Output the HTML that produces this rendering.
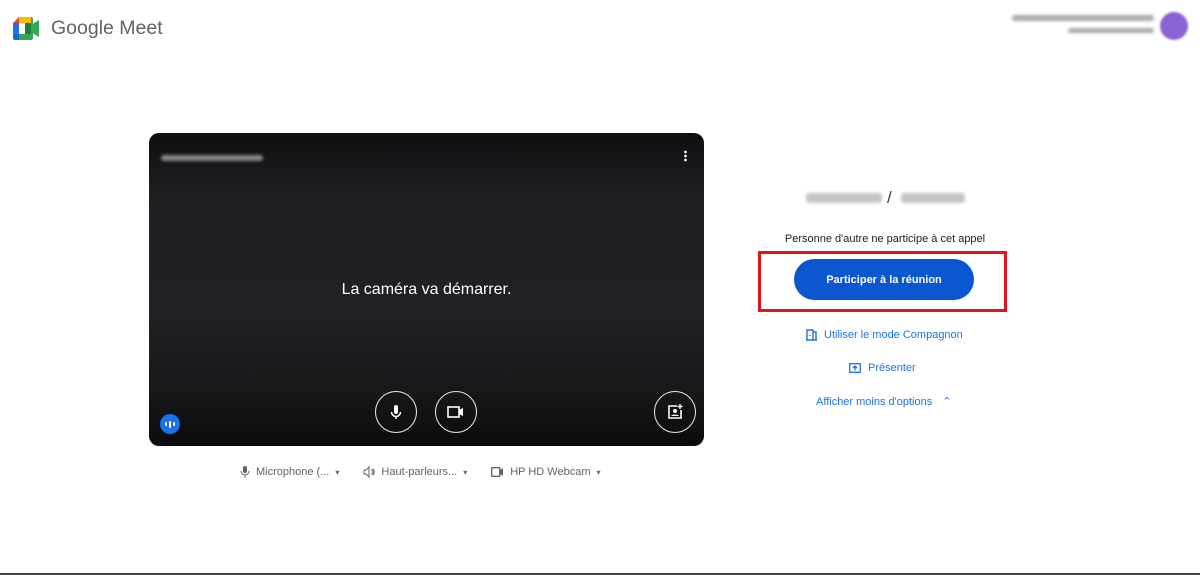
<!DOCTYPE html>
<html><head><meta charset="utf-8"><style>
*{margin:0;padding:0;box-sizing:border-box}
body{width:1200px;height:575px;background:#fff;position:relative;overflow:hidden;font-family:"Liberation Sans",sans-serif}
.abs{position:absolute}
.video{left:149px;top:133px;width:555px;height:313px;border-radius:10px;background:linear-gradient(#0e0f11 0%,#1f2023 22%,#202124 60%,#151618 85%,#0b0b0c 100%)}
.circ{width:42px;height:42px;border:1.5px solid #e8eaed;border-radius:50%;display:flex;align-items:center;justify-content:center}
.blur{background:#bdbdbd;filter:blur(1.5px);border-radius:3px}
.link{color:#1a73e8;font-size:11px;display:flex;align-items:center;gap:7px}
.dev{font-size:11px;color:#5f6368;display:flex;align-items:center;gap:6px}
</style></head><body>
<svg class="abs" style="left:13px;top:17px" width="29" height="23" viewBox="0 0 29 23">
<path d="M6 0h12v6H6z" fill="#fbbc04"/><path d="M0 6L6 0v6z" fill="#ea4335"/>
<path d="M0 6h6v11H0z" fill="#1a73e8"/><path d="M0 17h6v6H2a2 2 0 0 1-2-2z" fill="#1967d2"/>
<path d="M6 17h12v6H6z" fill="#34a853"/><path d="M18 0v23h0a2 2 0 0 0 2-2V2a2 2 0 0 0-2-2z" fill="#34a853"/>
<path d="M18 6v11H12V6z" fill="#188038"/><path d="M18 8l8-5v17l-8-5z" fill="#34a853"/><path d="M6 6h6v11H6z" fill="#fff"/>
</svg>
<div class="abs" style="left:51px;top:17px;font-size:19.5px;color:#5f6368">Google Meet</div>
<div class="abs blur" style="left:1012px;top:15px;width:142px;height:6px;background:#aaa"></div>
<div class="abs blur" style="left:1068px;top:28px;width:86px;height:5px;background:#aaa"></div>
<div class="abs" style="left:1160px;top:12px;width:28px;height:28px;border-radius:50%;background:#8a63d2;filter:blur(1px)"></div>

<div class="abs video">
 <div class="abs blur" style="left:12px;top:22px;width:102px;height:6px;background:#888"></div>
 <div class="abs" style="left:535px;top:17px;width:3px;height:12px;background:radial-gradient(circle,#fff 1.2px,transparent 1.5px) 0 0/3px 4px"></div>
 <div class="abs" style="left:0;right:0;top:148px;text-align:center;color:#fff;font-size:16px">La caméra va démarrer.</div>
 <div class="abs circ" style="left:226px;top:258px"><svg width="16" height="18" viewBox="0 0 16 18"><rect x="6" y="2" width="4" height="9" rx="2" fill="#fff"/><path d="M3.5 9a4.5 4.5 0 0 0 9 0M8 13.5V16" stroke="#fff" stroke-width="1.5" fill="none"/></svg></div>
 <div class="abs circ" style="left:286px;top:258px"><svg width="18" height="14" viewBox="0 0 18 14"><rect x="1" y="2" width="11" height="10" fill="none" stroke="#fff" stroke-width="1.6"/><path d="M12 5l4-2v8l-4-2z" fill="#fff"/></svg></div>
 <div class="abs circ" style="left:505px;top:258px"><svg width="16" height="16" viewBox="0 0 16 16"><path d="M10 2H2v12h12V6" fill="none" stroke="#fff" stroke-width="1.6"/><circle cx="8" cy="7" r="2" fill="#fff"/><path d="M4 12c1-2 7-2 8 0z" fill="#fff"/><path d="M13 0v5M10.5 2.5h5" stroke="#fff" stroke-width="1.4"/></svg></div>
 <div class="abs" style="left:11px;top:281px;width:20px;height:20px;border-radius:50%;background:#1a73e8;display:flex;align-items:center;justify-content:center;gap:2px">
  <i style="width:2px;height:4px;background:#fff;border-radius:1px"></i><i style="width:2px;height:7px;background:#fff;border-radius:1px"></i><i style="width:2px;height:4px;background:#fff;border-radius:1px"></i></div>
</div>

<div class="abs" style="left:240px;top:466px;display:flex;gap:24px">
 <div class="dev"><svg width="10" height="12" viewBox="0 0 10 12"><rect x="3" y="0" width="4" height="7" rx="2" fill="#5f6368"/><path d="M1 5a4 4 0 0 0 8 0M5 9v3" stroke="#5f6368" fill="none"/></svg>Microphone (... <span style="font-size:8px">▾</span></div>
 <div class="dev"><svg width="12" height="12" viewBox="0 0 12 12"><path d="M1 4h2l3-3v10L3 8H1z" fill="none" stroke="#5f6368"/><path d="M8 4a2 2 0 0 1 0 4M9.5 2.5a4.5 4.5 0 0 1 0 7" stroke="#5f6368" fill="none"/></svg>Haut-parleurs...<span style="font-size:8px">▾</span></div>
 <div class="dev"><svg width="13" height="10" viewBox="0 0 13 10"><rect x="0.7" y="0.7" width="8" height="8.6" fill="none" stroke="#5f6368" stroke-width="1.3"/><path d="M9 3l3-2v8l-3-2z" fill="#5f6368"/></svg>HP HD Webcam<span style="font-size:8px">▾</span></div>
</div>

<div class="abs blur" style="left:806px;top:193px;width:76px;height:10px;background:#c4c4c4"></div>
<div class="abs" style="left:887px;top:188px;font-size:17px;color:#3c4043">/</div>
<div class="abs blur" style="left:901px;top:193px;width:64px;height:10px;background:#c4c4c4"></div>
<div class="abs" style="left:760px;top:233px;width:250px;text-align:center;font-size:11px;color:#202124">Personne d'autre ne participe à cet appel</div>
<div class="abs" style="left:758px;top:251px;width:249px;height:61px;border:3px solid #e0141e"></div>
<div class="abs" style="left:794px;top:259px;width:180px;height:41px;border-radius:21px;background:#0b57d0;color:#fff;font-size:11px;font-weight:bold;display:flex;align-items:center;justify-content:center">Participer à la réunion</div>
<div class="abs link" style="left:806px;top:329px"><svg width="11" height="12" viewBox="0 0 11 12"><path d="M1 11V1h6v10M7 3h3v8M0 11h11M4 6v1" stroke="#1a73e8" stroke-width="1.4" fill="none"/></svg>Utiliser le mode Compagnon</div>
<div class="abs link" style="left:849px;top:362px"><svg width="12" height="10" viewBox="0 0 12 10"><rect x="0.7" y="0.7" width="10.6" height="8.6" fill="none" stroke="#1a73e8" stroke-width="1.3"/><path d="M6 7.5V3M4 5l2-2 2 2" stroke="#1a73e8" stroke-width="1.3" fill="none"/></svg>Présenter</div>
<div class="abs link" style="left:816px;top:395px">Afficher moins d'options <span style="margin-left:3px;font-size:11px">⌃</span></div>
<div class="abs" style="left:0;top:573px;width:1200px;height:2px;background:#444"></div>
</body></html>
